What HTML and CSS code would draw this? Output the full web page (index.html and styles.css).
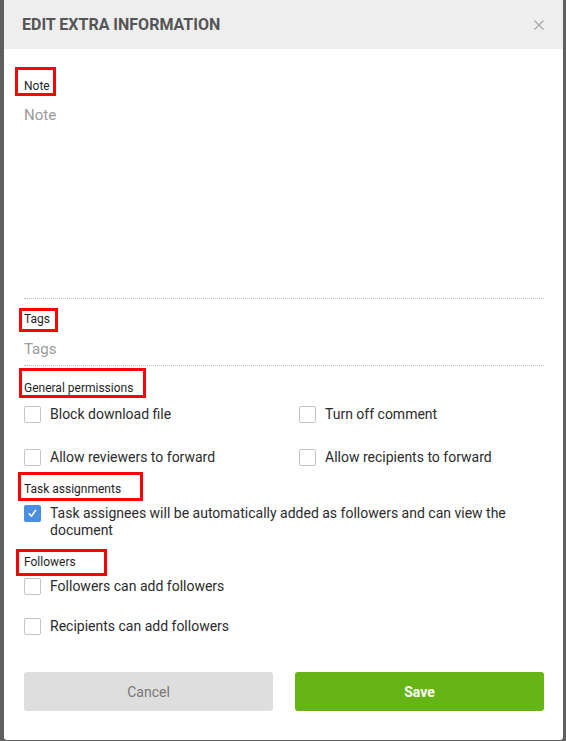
FILE: index.html
```html
<!DOCTYPE html>
<html lang="en">
<head>
<meta charset="utf-8">
<title>Edit extra information</title>
<link rel="stylesheet" href="styles.css">
</head>
<body>
<div class="modal">
  <div class="modal-header">
    <h1 class="modal-title">EDIT EXTRA INFORMATION</h1>
    <svg class="close" width="10" height="10" viewBox="0 0 10 10" aria-label="Close">
      <path d="M0.5 0.5 L9.5 9.5 M9.5 0.5 L0.5 9.5" stroke="#a9a9a9" stroke-width="1.3" fill="none"/>
    </svg>
  </div>
  <div class="modal-body">
    <div class="field-label label-note">Note</div>
    <div class="note-area">Note</div>

    <div class="field-label label-tags">Tags</div>
    <div class="tags-input">Tags</div>

    <div class="field-label label-gp">General permissions</div>
    <div class="perm-grid">
      <label class="check"><span class="box"></span><span>Block download file</span></label>
      <label class="check"><span class="box"></span><span>Turn off comment</span></label>
      <label class="check"><span class="box"></span><span>Allow reviewers to forward</span></label>
      <label class="check"><span class="box"></span><span>Allow recipients to forward</span></label>
    </div>

    <div class="field-label label-ta">Task assignments</div>
    <label class="check check-multi">
      <span class="box box-checked">
        <svg width="17" height="17" viewBox="0 0 17 17"><path d="M5.2 8.8 L7.4 11.2 L11.6 5.4" stroke="#fff" stroke-width="1.6" fill="none" stroke-linecap="round" stroke-linejoin="round"/></svg>
      </span>
      <span>Task assignees will be automatically added as followers and can view the document</span>
    </label>

    <div class="field-label label-f">Followers</div>
    <div class="follow-list">
      <label class="check"><span class="box"></span><span>Followers can add followers</span></label>
      <label class="check"><span class="box"></span><span>Recipients can add followers</span></label>
    </div>

    <div class="actions">
      <button class="btn btn-cancel" type="button">Cancel</button>
      <button class="btn btn-save" type="button">Save</button>
    </div>
  </div>
</div>
</body>
</html>
```
FILE: styles.css
```css
html, body {
  margin: 0;
  padding: 0;
}
body {
  background: #5f5f5f;
  font-family: Roboto, "Liberation Sans", Arial, sans-serif;
  height: 741px;
  overflow: hidden;
}
.modal {
  margin-left: 4px;
  width: 559px;
  height: 740px;
  background: #fff;
  border-radius: 0 0 3px 3px;
  overflow: hidden;
}
.modal-header {
  height: 49px;
  background: #eeeeee;
  display: flex;
  align-items: center;
  justify-content: space-between;
  padding: 0 19px 0 18px;
  box-sizing: border-box;
}
.modal-title {
  margin: 0;
  font-size: 16px;
  font-weight: 700;
  color: #555;
  line-height: 20px;
}
.close {
  display: block;
  margin-top: 1px;
}
.modal-body {
  padding: 0 19px 0 20px;
}
.field-label {
  box-sizing: border-box;
  border: 3px solid #ff0000;
  font-size: 12px;
  line-height: 14px;
  font-weight: 400;
  color: #1f1f1f;
  white-space: nowrap;
}
.label-note {
  margin: 18px 0 0 -9px;
  width: 41px;
  height: 29px;
  padding: 9px 0 0 6px;
}
.label-tags {
  margin: 9px 0 0 -5px;
  width: 39px;
  height: 24px;
  padding: 1px 0 0 2px;
}
.label-gp {
  margin: 2px 0 0 -5px;
  width: 127px;
  height: 30px;
  padding: 10px 0 0 2px;
}
.label-ta {
  margin: 5px 0 0 -6px;
  width: 125px;
  height: 29px;
  padding: 7px 0 0 3px;
}
.label-f {
  margin: 10px 0 0 -8px;
  width: 91px;
  height: 27px;
  padding: 3px 0 0 5px;
}
.note-area {
  box-sizing: border-box;
  height: 203px;
  padding-top: 10px;
  font-size: 15px;
  line-height: 18px;
  color: #9a9a9a;
  border-bottom: 1px dotted #bdbdbd;
}
.tags-input {
  box-sizing: border-box;
  height: 34px;
  padding-top: 8px;
  font-size: 15px;
  line-height: 18px;
  color: #9a9a9a;
  border-bottom: 1px dotted #bdbdbd;
}
.perm-grid {
  display: grid;
  grid-template-columns: 275px 1fr;
  row-gap: 23px;
  margin-top: 6px;
}
.check {
  display: flex;
  align-items: center;
  gap: 9px;
  height: 20px;
  font-size: 14px;
  line-height: 17px;
  color: #2b2b2b;
}
.box {
  flex: none;
  box-sizing: border-box;
  width: 17px;
  height: 17px;
  border: 1px solid #c4c4c4;
  border-radius: 2px;
  background: #fff;
}
.box-checked {
  border: none;
  background: #4a8fe2;
}
.box-checked svg {
  display: block;
}
.check-multi {
  height: auto;
  align-items: flex-start;
  margin-top: 4px;
}
.follow-list {
  display: flex;
  flex-direction: column;
  gap: 20px;
}
.actions {
  display: flex;
  gap: 22px;
  margin-top: 36px;
}
.btn {
  flex: 1;
  height: 39px;
  border: none;
  border-radius: 3px;
  font-family: Roboto, "Liberation Sans", Arial, sans-serif;
  font-size: 14px;
  padding: 0;
}
.btn-cancel {
  background: #dedede;
  color: #777;
}
.btn-save {
  background: #64b515;
  color: #fff;
  font-weight: 700;
}
```
